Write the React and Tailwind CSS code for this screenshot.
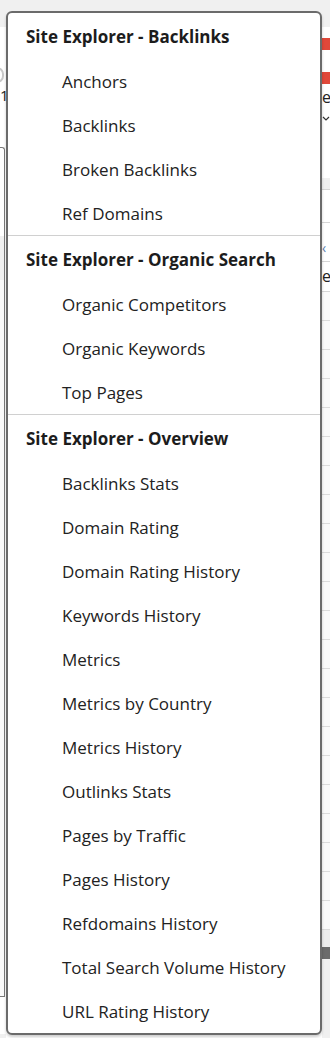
import React from "react";

const sections = [
  {
    title: "Site Explorer - Backlinks",
    items: ["Anchors", "Backlinks", "Broken Backlinks", "Ref Domains"],
  },
  {
    title: "Site Explorer - Organic Search",
    items: ["Organic Competitors", "Organic Keywords", "Top Pages"],
  },
  {
    title: "Site Explorer - Overview",
    items: [
      "Backlinks Stats",
      "Domain Rating",
      "Domain Rating History",
      "Keywords History",
      "Metrics",
      "Metrics by Country",
      "Metrics History",
      "Outlinks Stats",
      "Pages by Traffic",
      "Pages History",
      "Refdomains History",
      "Total Search Volume History",
      "URL Rating History",
    ],
  },
];

const gridRows = Array.from({ length: 22 });

const RightStrip = () => (
  <div className="w-[8px] flex flex-col bg-white overflow-hidden">
    <div className="h-[27px] bg-[#f0f0f0]" />
    <div className="h-[11px]" />
    <div className="h-[12px] bg-[#e0483a]" />
    <div className="h-[22px]" />
    <div className="h-[12px] bg-[#e0483a]" />
    <div className="h-[26px] leading-[26px] text-[16px] text-[#222] whitespace-nowrap">el</div>
    <div className="h-[16px] flex items-center">
      <svg width="8" height="8" viewBox="0 0 8 8">
        <path d="M1 3l3 3 3-3" fill="none" stroke="#333" strokeWidth="1.2" />
      </svg>
    </div>
    <div className="h-[52px]" />
    <div className="h-[12px] bg-[#f0f0f0] border-b border-[#d6d6d6]" />
    <div className="h-[33px] border-b border-[#d6d6d6]" />
    <div className="h-[39px] border-b border-[#d6d6d6] flex items-end pb-[6px] text-[14px] text-[#5b7fb0] leading-none">‹</div>
    <div className="h-[30px] border-b border-[#d6d6d6] text-[16px] leading-[28px] text-[#222]">e</div>
    {gridRows.map((_, i) => (
      <div key={i} className="h-[29px] shrink-0 bg-[#fafafa] border-b border-[#dcdcdc]" />
    ))}
    <div className="h-[17px] bg-[#ececec]" />
    <div className="h-[12px] bg-[#6b6b6b]" />
    <div className="flex-1 bg-[#f0f0f0]" />
  </div>
);

const LeftStrip = () => (
  <div className="w-[6px] flex flex-col overflow-hidden bg-white">
    <div className="h-[27px] bg-[#f0f0f0]" />
    <div className="h-[40px]" />
    <div className="h-[16px] w-[14px] -ml-[10px] rounded-full border-2 border-[#c8c8c8]" />
    <div className="h-[24px] text-[15px] leading-[24px] text-[#222]">1</div>
    <div className="h-[40px]" />
    <div className="flex-1 flex flex-col border-r border-[#7a7a7a] w-[5px] border-t rounded-tr-[3px]">
      <div className="h-[88px]" />
      <div className="h-[44px] bg-[#f0f0f0]" />
      <div className="flex-1 bg-[#fafafa] border-b border-[#7a7a7a]" />
    </div>
    <div className="h-[37px]" />
    <div className="h-[4px] bg-[#f0f0f0]" />
  </div>
);

export default function App() {
  return (
    <div
      className="relative w-[330px] h-[1038px] overflow-hidden bg-white"
      style={{ fontFamily: '"Open Sans", "Noto Sans", sans-serif' }}
    >
      <div className="flex h-full">
        <LeftStrip />
        <div className="flex-1 flex flex-col">
          <div className="h-[27px] bg-[#f0f0f0]" />
        </div>
        <RightStrip />
      </div>

      <div className="absolute left-[6px] top-[11px] w-[316px] h-[1024px] bg-white border-2 border-[#6b6b6b] rounded-[6px] shadow-[0_2px_3px_rgba(0,0,0,0.2)] flex flex-col">
        {sections.map((section, si) => (
          <div key={section.title} className={si > 0 ? "border-t border-[#d0d0d0]" : ""}>
            <div className="h-[46px] flex items-center pt-[2px] pl-[18px] text-[17px] font-bold text-[#1c1c1c] whitespace-nowrap">
              {section.title}
            </div>
            {section.items.map((item) => (
              <div key={item} className="h-[44px] flex items-center pt-[2px] pl-[54px] text-[17px] text-[#222] whitespace-nowrap">
                {item}
              </div>
            ))}
          </div>
        ))}
      </div>
    </div>
  );
}
